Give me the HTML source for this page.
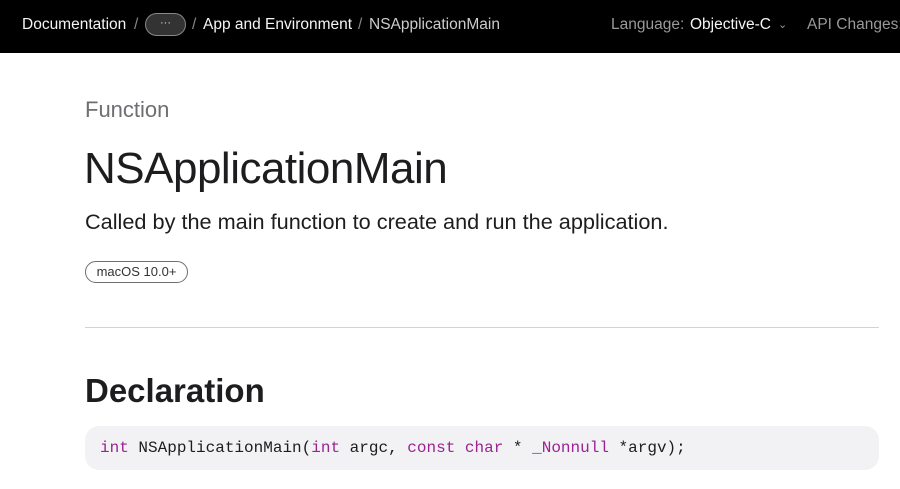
<!DOCTYPE html>
<html><head><style>
body{margin:0;width:900px;height:489px;overflow:hidden;background:#fff;font-family:"Liberation Sans",sans-serif;color:#1d1d1f}
.nav{position:absolute;left:0;top:0;width:900px;height:53px;background:#000;color:#ccc;font-size:15.5px;white-space:nowrap}
.nav span{position:absolute;top:16px}
.pill{position:absolute;left:145px;top:13px;width:41px;height:23px;border:1px solid #888;border-radius:12px;background:#333;box-sizing:border-box;color:#ddd;font-size:11px;text-align:center;line-height:19px}
.a{position:absolute;white-space:nowrap}
</style></head><body>
<div class="nav">
<span style="left:22px;color:#f5f5f7">Documentation</span>
<span style="left:134px;color:#888">/</span>
<div class="pill">···</div>
<span style="left:192px;color:#888">/</span>
<span style="left:203px;color:#f5f5f7">App and Environment</span>
<span style="left:358px;color:#888">/</span>
<span style="left:369px;color:#ccc">NSApplicationMain</span>
<span style="left:611px;color:#999">Language:</span>
<span style="left:690px;color:#f5f5f7">Objective-C</span>
<span style="left:778px;color:#999;font-size:11px;top:18px">⌄</span>
<span style="left:807px;color:#999">API Changes:</span>
</div>
<div class="a" style="left:85px;top:97px;font-size:22px;color:#6e6e73">Function</div>
<div class="a" style="left:84px;top:144px;font-size:44px;letter-spacing:-0.5px">NSApplicationMain</div>
<div class="a" style="left:85px;top:209px;font-size:21.7px">Called by the main function to create and run the application.</div>
<div class="a" style="left:85px;top:261px;width:103px;height:22px;border:1px solid #6e6e73;border-radius:12px;box-sizing:border-box;font-size:13px;text-align:center;line-height:20px;color:#333">macOS 10.0+</div>
<div class="a" style="left:85px;top:327px;width:794px;height:1px;background:#d2d2d7"></div>
<div class="a" style="left:85px;top:372px;font-size:33px;font-weight:bold">Declaration</div>
<div class="a" style="left:85px;top:426px;width:794px;height:44px;background:#f2f2f4;border-radius:14px"></div>
<div class="a" style="left:100px;top:439px;font-family:'Liberation Mono',monospace;font-size:16px;color:#1d1d1f"><span style="color:#9b2393">int</span> NSApplicationMain(<span style="color:#9b2393">int</span> argc, <span style="color:#9b2393">const</span> <span style="color:#9b2393">char</span> * <span style="color:#9b2393">_Nonnull</span> *argv);</div>
</body></html>
